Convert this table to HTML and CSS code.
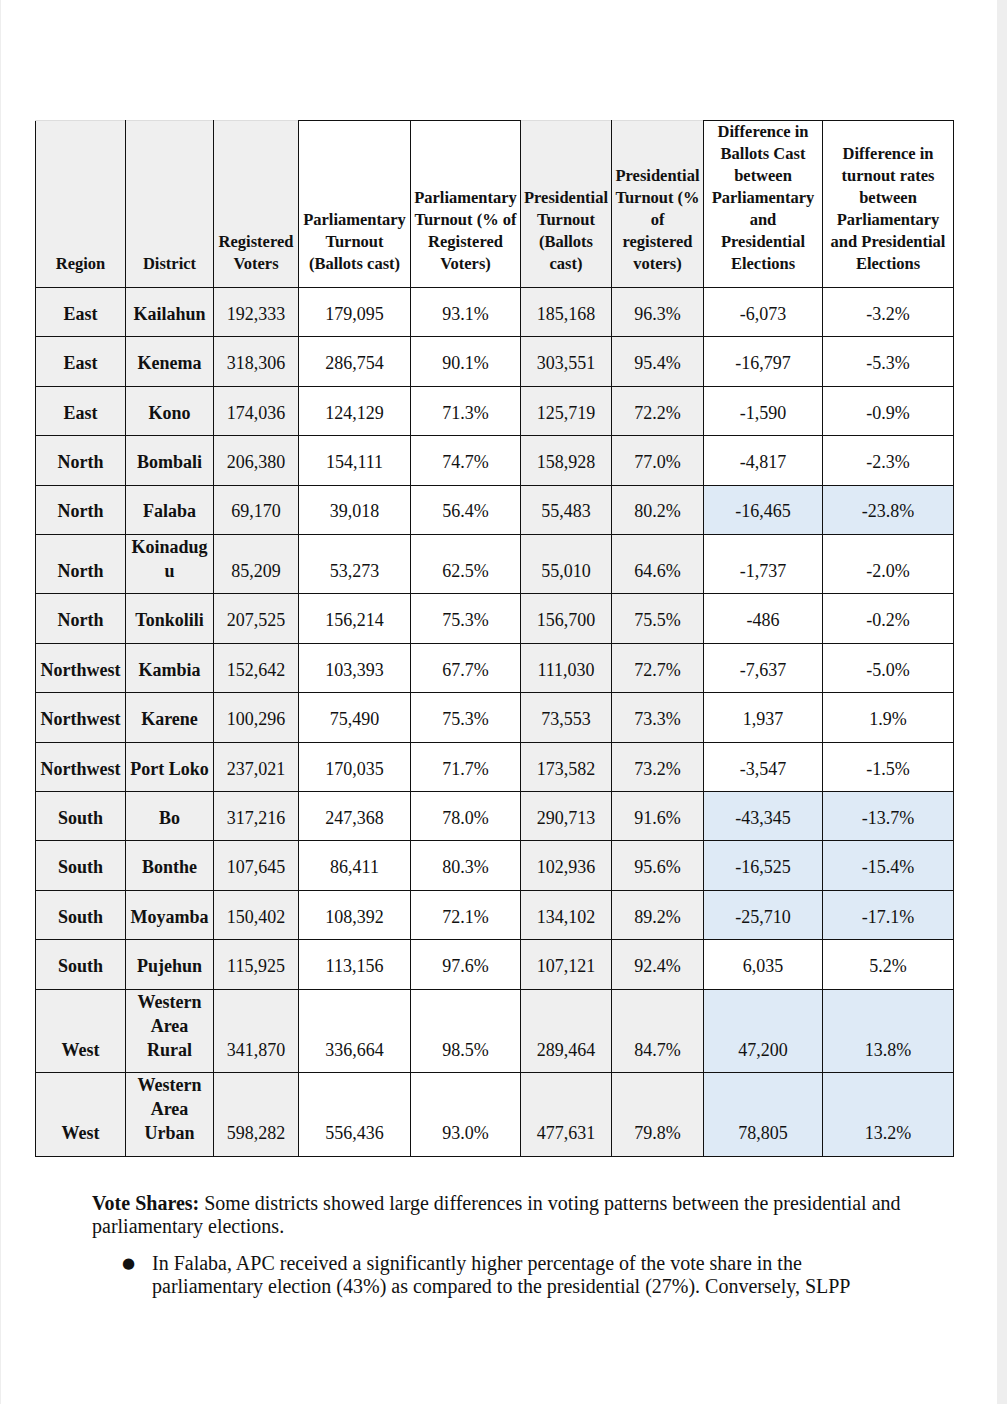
FILE: index.html
```html
<!DOCTYPE html>
<html lang="en">
<head>
<meta charset="utf-8">
<title>Turnout comparison</title>
<link rel="stylesheet" href="styles.css">
</head>
<body>
<div class="page">
  <table class="turnout">
    <colgroup>
      <col class="c-region"><col class="c-district"><col class="c-reg">
      <col class="c-pt"><col class="c-pp"><col class="c-rt"><col class="c-rp">
      <col class="c-d1"><col class="c-d2">
    </colgroup>
    <thead>
      <tr>
        <th class="g">Region</th>
        <th class="g">District</th>
        <th class="g">Registered<br>Voters</th>
        <th>Parliamentary<br>Turnout<br>(Ballots cast)</th>
        <th>Parliamentary<br>Turnout (% of<br>Registered<br>Voters)</th>
        <th class="g">Presidential<br>Turnout<br>(Ballots<br>cast)</th>
        <th class="g">Presidential<br>Turnout (%<br>of<br>registered<br>voters)</th>
        <th>Difference in<br>Ballots Cast<br>between<br>Parliamentary<br>and<br>Presidential<br>Elections</th>
        <th>Difference in<br>turnout rates<br>between<br>Parliamentary<br>and Presidential<br>Elections</th>
      </tr>
    </thead>
    <tbody>
      <tr><td class="g k">East</td><td class="g k">Kailahun</td><td class="g">192,333</td><td>179,095</td><td>93.1%</td><td class="g">185,168</td><td class="g">96.3%</td><td>-6,073</td><td>-3.2%</td></tr>
      <tr><td class="g k">East</td><td class="g k">Kenema</td><td class="g">318,306</td><td>286,754</td><td>90.1%</td><td class="g">303,551</td><td class="g">95.4%</td><td>-16,797</td><td>-5.3%</td></tr>
      <tr><td class="g k">East</td><td class="g k">Kono</td><td class="g">174,036</td><td>124,129</td><td>71.3%</td><td class="g">125,719</td><td class="g">72.2%</td><td>-1,590</td><td>-0.9%</td></tr>
      <tr><td class="g k">North</td><td class="g k">Bombali</td><td class="g">206,380</td><td>154,111</td><td>74.7%</td><td class="g">158,928</td><td class="g">77.0%</td><td>-4,817</td><td>-2.3%</td></tr>
      <tr><td class="g k">North</td><td class="g k">Falaba</td><td class="g">69,170</td><td>39,018</td><td>56.4%</td><td class="g">55,483</td><td class="g">80.2%</td><td class="b">-16,465</td><td class="b">-23.8%</td></tr>
      <tr><td class="g k">North</td><td class="g k">Koinadug<br>u</td><td class="g">85,209</td><td>53,273</td><td>62.5%</td><td class="g">55,010</td><td class="g">64.6%</td><td>-1,737</td><td>-2.0%</td></tr>
      <tr><td class="g k">North</td><td class="g k">Tonkolili</td><td class="g">207,525</td><td>156,214</td><td>75.3%</td><td class="g">156,700</td><td class="g">75.5%</td><td>-486</td><td>-0.2%</td></tr>
      <tr><td class="g k">Northwest</td><td class="g k">Kambia</td><td class="g">152,642</td><td>103,393</td><td>67.7%</td><td class="g">111,030</td><td class="g">72.7%</td><td>-7,637</td><td>-5.0%</td></tr>
      <tr><td class="g k">Northwest</td><td class="g k">Karene</td><td class="g">100,296</td><td>75,490</td><td>75.3%</td><td class="g">73,553</td><td class="g">73.3%</td><td>1,937</td><td>1.9%</td></tr>
      <tr><td class="g k">Northwest</td><td class="g k">Port Loko</td><td class="g">237,021</td><td>170,035</td><td>71.7%</td><td class="g">173,582</td><td class="g">73.2%</td><td>-3,547</td><td>-1.5%</td></tr>
      <tr><td class="g k">South</td><td class="g k">Bo</td><td class="g">317,216</td><td>247,368</td><td>78.0%</td><td class="g">290,713</td><td class="g">91.6%</td><td class="b">-43,345</td><td class="b">-13.7%</td></tr>
      <tr><td class="g k">South</td><td class="g k">Bonthe</td><td class="g">107,645</td><td>86,411</td><td>80.3%</td><td class="g">102,936</td><td class="g">95.6%</td><td class="b">-16,525</td><td class="b">-15.4%</td></tr>
      <tr><td class="g k">South</td><td class="g k">Moyamba</td><td class="g">150,402</td><td>108,392</td><td>72.1%</td><td class="g">134,102</td><td class="g">89.2%</td><td class="b">-25,710</td><td class="b">-17.1%</td></tr>
      <tr><td class="g k">South</td><td class="g k">Pujehun</td><td class="g">115,925</td><td>113,156</td><td>97.6%</td><td class="g">107,121</td><td class="g">92.4%</td><td>6,035</td><td>5.2%</td></tr>
      <tr><td class="g k">West</td><td class="g k">Western<br>Area<br>Rural</td><td class="g">341,870</td><td>336,664</td><td>98.5%</td><td class="g">289,464</td><td class="g">84.7%</td><td class="b">47,200</td><td class="b">13.8%</td></tr>
      <tr><td class="g k">West</td><td class="g k">Western<br>Area<br>Urban</td><td class="g">598,282</td><td>556,436</td><td>93.0%</td><td class="g">477,631</td><td class="g">79.8%</td><td class="b">78,805</td><td class="b">13.2%</td></tr>
    </tbody>
  </table>

  <p class="note"><strong>Vote Shares:</strong> Some districts showed large differences in voting patterns between the presidential and parliamentary elections.</p>
  <ul class="points">
    <li>In Falaba, APC received a significantly higher percentage of the vote share in the parliamentary election (43%) as compared to the presidential (27%). Conversely, SLPP</li>
  </ul>
</div>
</body>
</html>
```

FILE: styles.css
```css
html, body {
  margin: 0;
  padding: 0;
}

body {
  background: #eeeeee;
  font-family: "Liberation Serif", "Times New Roman", serif;
  color: #111111;
}

.page {
  margin-left: 1px;
  width: 996px;
  min-height: 1404px;
  background: #ffffff;
  padding-top: 120px;
  box-sizing: border-box;
  overflow: hidden;
}

.turnout {
  margin-left: 34px;
  width: 918px;
  border-collapse: collapse;
  table-layout: fixed;
}

.c-region { width: 90px; }
.c-district { width: 88px; }
.c-reg { width: 85px; }
.c-pt { width: 112px; }
.c-pp { width: 110px; }
.c-rt { width: 91px; }
.c-rp { width: 92px; }
.c-d1 { width: 119px; }
.c-d2 { width: 131px; }

.turnout th,
.turnout td {
  border: 1px solid #111111;
  text-align: center;
  vertical-align: bottom;
  white-space: nowrap;
  padding: 0 1px 10.5px;
}

.turnout th {
  font-size: 16.5px;
  line-height: 22px;
  font-weight: bold;
  padding-bottom: 12px;
}

.turnout thead th.g {
  border-top-color: #dddddd;
}

.turnout td {
  font-size: 18px;
  line-height: 24px;
}

.turnout tbody tr {
  height: 49.4px;
}

.turnout .k {
  font-weight: bold;
}

.turnout .g {
  background: #efefef;
}

.turnout .b {
  background: #deeaf6;
}

.note {
  margin: 35px 0 0 91px;
  width: 850px;
  font-size: 20px;
  line-height: 23px;
}

.points {
  margin: 14px 0 0 151px;
  padding: 0;
  width: 730px;
  list-style: none;
  font-size: 20px;
  line-height: 23px;
}

.points li::before {
  content: "\25CF";
  display: inline-block;
  width: 30px;
  margin-left: -30px;
  font-family: "DejaVu Sans", sans-serif;
  font-size: 15px;
  line-height: 23px;
  vertical-align: top;
}
```
